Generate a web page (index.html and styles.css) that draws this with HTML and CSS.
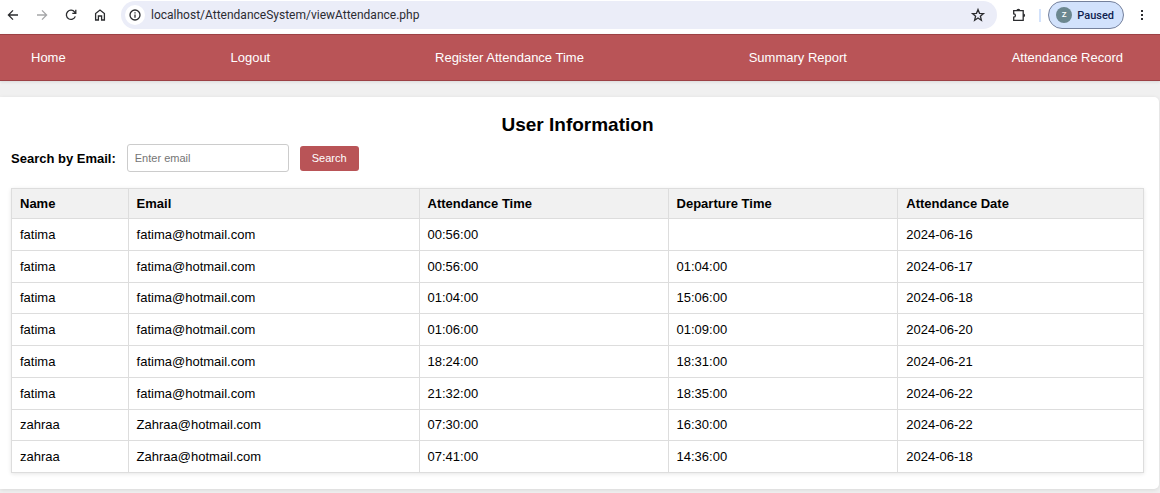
FILE: index.html
```html
<!DOCTYPE html>
<html lang="en">
<head>
<meta charset="utf-8">
<title>User Information</title>
<link rel="stylesheet" href="styles.css">
</head>
<body>
<header class="toolbar">
  <div class="tools">
    <button class="icon-btn" aria-label="Back"><svg width="16" height="16" viewBox="0 0 16 16"><path d="M13 8H3.600M8 3.400 3.400 8 8 12.600"/></svg></button>
    <button class="icon-btn dim" aria-label="Forward"><svg width="16" height="16" viewBox="0 0 16 16"><path d="M3 8h9.400M8 3.400 12.600 8 8 12.600"/></svg></button>
    <button class="icon-btn" aria-label="Reload"><svg width="16" height="16" viewBox="0 0 16 16"><path d="M12.300 9.400A4.600 4.600 0 1 1 11.700 5.100L12.600 6.200M12.800 2.800V6.400H9.300"/></svg></button>
    <button class="icon-btn" aria-label="Home page"><svg width="16" height="16" viewBox="0 0 16 16"><path d="M3.600 13V6.500L8 3l4.400 3.500V13H9.600V9H6.400v4z"/></svg></button>
  </div>
  <div class="address">
    <button class="site-info" aria-label="Site information"><svg width="14" height="14" viewBox="0 0 14 14"><circle cx="7" cy="7" r="5"/><path d="M7 6.500v3.200M7 4.200v1.300"/></svg></button>
    <input class="url" aria-label="Address" value="localhost/AttendanceSystem/viewAttendance.php">
    <button class="icon-btn" aria-label="Bookmark"><svg width="16" height="16" viewBox="0 0 16 16"><path d="m8 2.500 1.500 3.800 4 .3-3.100 2.600 1 4L8 11l-3.400 2.200 1-4-3.100-2.600 4-.3z"/></svg></button>
  </div>
  <button class="icon-btn ext" aria-label="Extensions"><svg width="16" height="16" viewBox="0 0 16 16"><path d="M2.700 3.600H12.200V13.400H2.700V10.200c2.300 0 2.300-3.300 0-3.300z"/><path class="solid" d="M5.500 3.600a1.900 1.900 0 0 1 3.800 0zM12.200 6.400a1.900 1.900 0 0 1 0 3.800z"/></svg></button>
  <span class="divider"></span>
  <button class="profile"><span class="avatar">Z</span>Paused</button>
  <button class="icon-btn" aria-label="Menu"><svg width="16" height="16" viewBox="0 0 16 16"><path class="solid" d="M7 3h2v2H7zM7 7h2v2H7zM7 11h2v2H7z"/></svg></button>
</header>
<nav class="nav">
  <a href="#">Home</a>
  <a href="#">Logout</a>
  <a href="#">Register Attendance Time</a>
  <a href="#">Summary Report</a>
  <a href="#">Attendance Record</a>
</nav>
<main class="card">
  <h1>User Information</h1>
  <form class="search">
    <label for="email">Search by Email:</label>
    <input id="email" type="text" placeholder="Enter email">
    <button type="button">Search</button>
  </form>
  <table>
    <colgroup><col class="c-name"><col class="c-email"><col class="c-arrive"><col class="c-leave"><col></colgroup>
    <thead>
      <tr><th>Name</th><th>Email</th><th>Attendance Time</th><th>Departure Time</th><th>Attendance Date</th></tr>
    </thead>
    <tbody>
      <tr><td>fatima</td><td>fatima@hotmail.com</td><td>00:56:00</td><td></td><td>2024-06-16</td></tr>
      <tr><td>fatima</td><td>fatima@hotmail.com</td><td>00:56:00</td><td>01:04:00</td><td>2024-06-17</td></tr>
      <tr><td>fatima</td><td>fatima@hotmail.com</td><td>01:04:00</td><td>15:06:00</td><td>2024-06-18</td></tr>
      <tr><td>fatima</td><td>fatima@hotmail.com</td><td>01:06:00</td><td>01:09:00</td><td>2024-06-20</td></tr>
      <tr><td>fatima</td><td>fatima@hotmail.com</td><td>18:24:00</td><td>18:31:00</td><td>2024-06-21</td></tr>
      <tr><td>fatima</td><td>fatima@hotmail.com</td><td>21:32:00</td><td>18:35:00</td><td>2024-06-22</td></tr>
      <tr><td>zahraa</td><td>Zahraa@hotmail.com</td><td>07:30:00</td><td>16:30:00</td><td>2024-06-22</td></tr>
      <tr><td>zahraa</td><td>Zahraa@hotmail.com</td><td>07:41:00</td><td>14:36:00</td><td>2024-06-18</td></tr>
    </tbody>
  </table>
</main>
</body>
</html>
```
FILE: styles.css
```css
* { box-sizing: border-box; }
body {
  margin: 0;
  background: #f0f0f0;
  color: #000;
  font: 13px/15px "Liberation Sans", Arial, sans-serif;
}
button, input { font: inherit; margin: 0; }
button { border: 0; padding: 0; background: none; color: inherit; }

.toolbar {
  display: flex;
  align-items: center;
  padding: 1px 10px 5px 5px;
  background: #fff;
  font-family: Roboto, sans-serif;
  font-size: 11px;
}
.tools { display: flex; gap: 13px; margin-right: 13px; }
.icon-btn { display: flex; }
svg { fill: none; stroke: #2b2c2f; stroke-width: 1.3; }
.solid { fill: #2b2c2f; stroke: none; }
.dim svg { stroke: #a5a6a8; }
.address {
  display: flex;
  flex: 1;
  align-items: center;
  height: 28px;
  padding: 0 11px 0 4px;
  border-radius: 14px;
  background: #ebedf8;
}
.site-info {
  display: flex;
  align-items: center;
  justify-content: center;
  width: 20px;
  height: 20px;
  border-radius: 50%;
  background: #fff;
}
.url {
  flex: 1;
  min-width: 0;
  padding: 0 6px;
  border: 0;
  background: none;
  color: #2b2c33;
  font-size: 12px;
}
.ext { margin-left: 14px; }
.divider { width: 2px; height: 13px; margin: 0 7px 0 12px; background: #d3e2fb; }
.profile {
  display: flex;
  align-items: center;
  gap: 5px;
  height: 28px;
  margin-right: 10px;
  padding: 0 9px 0 7px;
  border: 1px solid #75819c;
  border-radius: 14px;
  background: #d2e2fc;
  color: #101f50;
  font-weight: 500;
}
.avatar {
  width: 16px;
  height: 16px;
  border-radius: 50%;
  background: #6b8790;
  color: #fff;
  font-size: 8px;
  line-height: 16px;
  text-align: center;
}

.nav {
  display: flex;
  flex-wrap: wrap;
  justify-content: space-between;
  padding: 15px 37px 15px 31px;
  border: solid #9c4145;
  border-width: 1px 0;
  background: #b95457;
  box-shadow: 0 1px 3px rgba(0, 0, 0, 0.1);
}
.nav a { color: #fff; text-decoration: none; }

.card {
  margin: 16px 1px 4px 0;
  padding: 16px 15px 16px 11px;
  border-radius: 0 5px 5px 0;
  background: #fff;
  box-shadow: 0 1px 4px rgba(0, 0, 0, 0.1);
}
h1 { margin: 0 0 8px; font-size: 19px; line-height: 23px; text-align: center; }
.search { display: flex; align-items: center; gap: 11px; margin-bottom: 16px; }
.search label { font-weight: bold; }
.search input {
  width: 162px;
  height: 28px;
  padding: 0 7px;
  border: 1px solid #ccc;
  border-radius: 3px;
  font-size: 11px;
}
.search input::placeholder { color: #757575; }
.search button {
  height: 25px;
  padding: 0 12px;
  border-radius: 3px;
  background: #b95457;
  color: #fff;
  font-size: 11px;
}
table {
  width: 100%;
  height: 285px;
  border-collapse: collapse;
  table-layout: fixed;
  box-shadow: 0 1px 4px rgba(0, 0, 0, 0.1);
}
.c-name { width: 10.3%; }
.c-email { width: 25.7%; }
.c-arrive { width: 22%; }
.c-leave { width: 20.3%; }
th, td { padding: 7px 8px; border: 1px solid #ddd; text-align: left; }
th { background: #f1f1f1; }
```
